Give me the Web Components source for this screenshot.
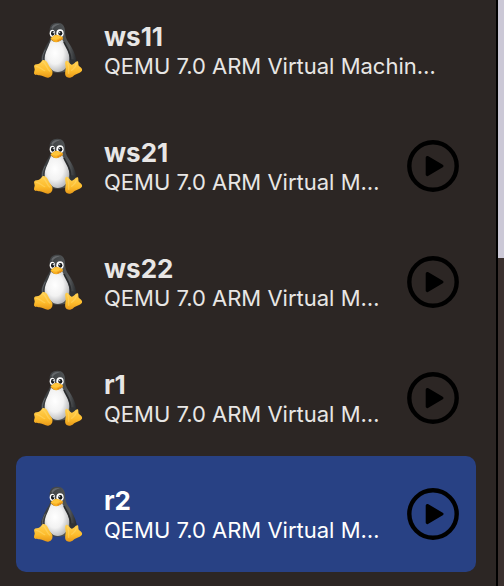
<!DOCTYPE html>
<html lang="en">
<head>
<meta charset="utf-8">
<meta name="viewport" content="width=device-width, initial-scale=1">
<title>Virtual machines</title>
<style>
html, body { height: 100%; }
body { margin: 0; background: #2c2624; font-family: Inter, "Liberation Sans", sans-serif; overflow: hidden; }
</style>
</head>
<body>
<vm-window>
  <vm-list>
    <vm-row name="ws11">QEMU 7.0 ARM Virtual Machin…</vm-row>
    <vm-row name="ws21" startable>QEMU 7.0 ARM Virtual M…</vm-row>
    <vm-row name="ws22" startable>QEMU 7.0 ARM Virtual M…</vm-row>
    <vm-row name="r1" startable>QEMU 7.0 ARM Virtual M…</vm-row>
    <vm-row name="r2" startable selected>QEMU 7.0 ARM Virtual M…</vm-row>
  </vm-list>
  <vm-detail slot="detail"></vm-detail>
</vm-window>

<template id="window-template">
  <style>
    :host { display: flex; height: 100vh; overflow: hidden; }
    main { flex: 1; min-width: 0; border-right: 2px solid #000; overflow: hidden; }
  </style>
  <main><slot></slot></main>
  <slot name="detail"></slot>
</template>

<template id="detail-template">
  <style>
    :host { display: flex; flex-direction: column; width: 6px; background: #3a302e; }
    div { flex: 0 0 44%; background: #cbc8d6; }
  </style>
  <div></div>
</template>

<template id="list-template">
  <style>
    /* The list is scrolled a little past its first row's top edge. */
    :host { display: block; padding: 0 20px 0 16px; margin-top: -8px; }
  </style>
  <div role="list"><slot></slot></div>
</template>

<template id="row-template">
  <style>
    :host { display: flex; align-items: center; gap: 20px; box-sizing: border-box; height: 116px; padding: 0 16px; border-radius: 10px; color: #e8e6e5; }
    :host([selected]) { background: #284184; color: #fff; }
    .text { flex: 1; min-width: 0; padding-top: 2px; }
    h2, p { margin: 0; white-space: nowrap; }
    h2 { font-size: 26px; line-height: 30px; font-weight: 700; }
    p { font-size: 22px; line-height: 28px; }
    vm-play { display: none; }
    :host([startable]) vm-play { display: block; }
  </style>
  <tux-icon></tux-icon>
  <div class="text"><h2></h2><p><slot></slot></p></div>
  <vm-play></vm-play>
</template>

<template id="play-template">
  <style>
    :host { display: block; }
    button { display: block; width: 54px; height: 54px; padding: 0; border: 0; background: none; color: #000; cursor: pointer; }
    svg { display: block; }
  </style>
  <button type="button" aria-label="Run">
    <svg width="54" height="54" viewBox="0 0 54 54" aria-hidden="true">
      <circle cx="27" cy="27" r="23.7" fill="none" stroke="currentColor" stroke-width="4.4"/>
      <path d="M21.2 18.4 L36 27 L21.2 35.6 Z" fill="currentColor" stroke="currentColor" stroke-width="3" stroke-linejoin="round"/>
    </svg>
  </button>
</template>

<template id="tux-template">
  <style>
    :host { display: block; flex: none; }
    svg { display: block; }
  </style>
  <svg width="52" height="60" viewBox="24 30 156 180" role="img" aria-label="Linux">
    <defs>
      <linearGradient id="body" x1="0" y1="0" x2="1" y2="0"><stop offset="0" stop-color="#35383b"/><stop offset=".45" stop-color="#46494b"/><stop offset=".8" stop-color="#55585a"/><stop offset="1" stop-color="#25272a"/></linearGradient>
      <radialGradient id="belly" cx=".42" cy=".42" r=".62"><stop offset="0" stop-color="#fff"/><stop offset=".55" stop-color="#f2f2f2"/><stop offset="1" stop-color="#b9babc"/></radialGradient>
      <linearGradient id="foot" x1="0" y1="0" x2="0" y2="1"><stop offset="0" stop-color="#ffd052"/><stop offset=".6" stop-color="#fdbc2c"/><stop offset="1" stop-color="#e79818"/></linearGradient>
    </defs>
    <path d="M77 63 C76 46 85 38 100 38 C115 38 123 48 123 63 C123 77 126 88 134 98 C145 114 153 130 157 147 C160 158 155 166 145 167 L128 184 C114 190 88 190 74 183 L60 159 C52 157 49 147 53 138 C56 130 60 119 65 110 C70 101 78 92 79 82 Z" fill="url(#body)"/>
    <path d="M82 54 C85 43 96 40 108 43 C98 46 90 49 86 57 Z" fill="#66696c"/>
    <path d="M64 119 C58 131 54 139 56 150" fill="none" stroke="#76797b" stroke-width="2"/>
    <path d="M81 88 C88 99 103 98 115 88 C119 101 131 112 134 130 C138 148 134 167 122 178 C110 189 90 188 81 177 C72 168 62 159 62 145 C62 131 69 119 74 107 C77 99 80 95 81 88 Z" fill="url(#belly)"/>
    <path d="M120 96 C128 115 141 126 140 151" fill="none" stroke="#292b2d" stroke-width="5"/>
    <path d="M137 151 C143 144 157 148 157 158 C156 167 145 170 138 161 Z" fill="#303336"/>
    <ellipse cx="85" cy="70" rx="8" ry="11" fill="#fff"/>
    <ellipse cx="108" cy="70" rx="11" ry="12" fill="#fff"/>
    <ellipse cx="86" cy="70" rx="5" ry="7" fill="#14171a"/>
    <ellipse cx="109" cy="70" rx="6" ry="7" fill="#14171a"/>
    <circle cx="88" cy="68" r="2" fill="#e5eef2"/>
    <circle cx="107" cy="68" r="2" fill="#e5eef2"/>
    <path d="M80 85 C83 80 89 79 94 75 C100 73 106 78 114 80 C119 83 117 88 112 90 C107 92 102 98 96 97 C90 97 85 91 81 88 Z" fill="#f8ae20"/>
    <path d="M84 83 C89 80 91 76 97 76 C103 76 107 81 112 82 C105 84 101 90 95 89 C90 89 87 86 82 86 Z" fill="#ffc63a"/>
    <path d="M100 93 C106 91 109 88 114 86" fill="none" stroke="#e0851a" stroke-width="3"/>
    <path d="M55 151 C61 148 69 153 72 161 C75 170 83 176 85 184 C87 194 82 202 73 203 C64 204 57 197 47 196 C39 195 31 196 30 190 C30 183 34 179 31 173 C29 167 31 163 38 163 C45 162 50 160 55 151 Z" fill="url(#foot)"/>
    <path d="M56 156 C65 157 67 175 77 183 M37 169 C47 170 52 177 62 182" fill="none" stroke="#ffe080" stroke-width="4" stroke-linecap="round" opacity=".4"/>
    <path d="M126 153 C134 150 135 162 143 164 C151 164 154 153 161 154 C165 156 161 165 166 169 C171 173 176 176 174 182 C167 191 157 190 149 197 C142 204 131 206 126 199 C121 192 125 182 125 173 C125 165 121 157 126 153 Z" fill="url(#foot)"/>
    <path d="M131 158 C136 171 135 178 134 190 M157 162 C156 173 149 175 143 181" fill="none" stroke="#ffe080" stroke-width="4" stroke-linecap="round" opacity=".4"/>
  </svg>
</template>

<script>
class TemplateElement extends HTMLElement {
  constructor() {
    super();
    const template = document.getElementById(this.constructor.template);
    this.attachShadow({ mode: "open" }).append(template.content.cloneNode(true));
  }
}
class TuxIcon extends TemplateElement { static template = "tux-template"; }
class VmPlay extends TemplateElement { static template = "play-template"; }
class VmRow extends TemplateElement {
  static template = "row-template";
  connectedCallback() {
    const name = this.getAttribute("name");
    this.setAttribute("role", "listitem");
    this.shadowRoot.querySelector("h2").textContent = name;
  }
}
class VmList extends TemplateElement { static template = "list-template"; }
class VmDetail extends TemplateElement { static template = "detail-template"; }
class VmWindow extends TemplateElement { static template = "window-template"; }
customElements.define("tux-icon", TuxIcon);
customElements.define("vm-play", VmPlay);
customElements.define("vm-row", VmRow);
customElements.define("vm-list", VmList);
customElements.define("vm-detail", VmDetail);
customElements.define("vm-window", VmWindow);
</script>
</body>
</html>
